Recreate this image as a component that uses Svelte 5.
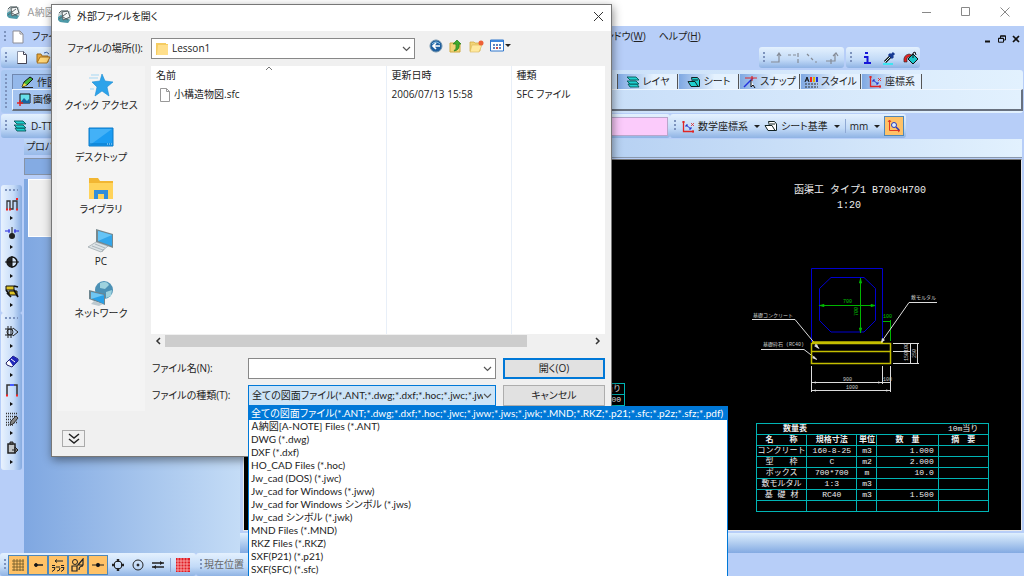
<script lang="ts">
    const places = ['クイック アクセス', 'デスクトップ', 'ライブラリ', 'PC', 'ネットワーク'];

    const fileTypes = [
        '全ての図面ファイル(*.ANT;*.dwg;*.dxf;*.hoc;*.jwc;*.jww;*.jws;*.jwk;*.MND;*.RKZ;*.p21;*.sfc;*.p2z;*.sfz;*.pdf)',
        'Ａ納図[A-NOTE] Files (*.ANT)',
        'DWG (*.dwg)',
        'DXF (*.dxf)',
        'HO_CAD Files (*.hoc)',
        'Jw_cad (DOS) (*.jwc)',
        'Jw_cad for Windows (*.jww)',
        'Jw_cad for Windows シンボル (*.jws)',
        'Jw_cad シンボル (*.jwk)',
        'MND Files (*.MND)',
        'RKZ Files (*.RKZ)',
        'SXF(P21) (*.p21)',
        'SXF(SFC) (*.sfc)'
    ];

    const tabs = ['レイヤ', 'シート', 'スナップ', 'スタイル', '座標系'];

    const quantities = [
        ['コンクリート', '160-8-25', 'm3', '1.000'],
        ['型　　枠', 'C', 'm2', '2.000'],
        ['ボックス', '700*700', 'm', '10.0'],
        ['敷モルタル', '1:3', 'm3', ''],
        ['基 礎 材', 'RC40', 'm3', '1.500'],
        ['', '', '', '']
    ];

    const snapModes = ['grid', 'end', 'line', 'shape', 'mid', 'circle', 'center', 'parallel'];

    let selectedType = $state(0);
    let fileName = $state('');
</script>

{#snippet appIcon()}
    <svg class="icon" width="15" height="15" viewBox="0 0 15 15">
        <path d="M1 5 5 1l8 1 1 8-3 4-8-1-2-3z" fill="#c9d3d5" />
        <path d="M1 8l3-2 9 5-2 3-8-1-2-2z" fill="#4c9aa8" />
        <path d="M5 3l6-1 2 6-7 3z" fill="#f5f7f7" stroke="#566164" />
        <path d="M2 10l8-6M2 4l2-2h7M6 8l5 3" stroke="#5d6769" fill="none" />
    </svg>
{/snippet}

{#snippet layerIcon()}
    <svg class="icon" width="14" height="12" viewBox="0 0 14 12">
        <g fill="#1fd0d0" stroke="#075656" stroke-width=".9">
            <path d="M2 8h9l2 3H4z" /><path d="M1 5h9l3 3H4z" /><path d="M1 1h9l3 3H4z" />
        </g>
    </svg>
{/snippet}

{#snippet sheetIcon(fill: string)}
    <svg class="icon" width="14" height="12" viewBox="0 0 14 12">
        <g {fill} stroke="#122" stroke-width="1">
            <path d="M4.500 1.500h6l2 2.500v6.500h-6z" /><path d="M1 5.500h7l3 5H4z" /><path d="M6 4h5" fill="none" />
        </g>
    </svg>
{/snippet}

{#snippet axisIcon()}
    <svg class="icon" width="14" height="13" viewBox="0 0 14 13">
        <path d="M2.500 1v10.500H13" stroke="#e02525" stroke-width="1.300" fill="none" />
        <path d="M1 2h3M12 10v3" stroke="#e02525" />
        <path d="M5 5l5 4M5 7V5h2M10 7v2H8" stroke="#2233cc" fill="none" />
        <path d="M10 3l3 3M13 3l-3 3" stroke="#e02525" stroke-width=".8" />
    </svg>
{/snippet}

{#snippet chevron()}
    <svg class="chevron" width="9" height="6" viewBox="0 0 9 6">
        <path d="M1 1l3.500 3.500L8 1" stroke="#555" stroke-width="1.200" fill="none" />
    </svg>
{/snippet}

<div class="app">
    <header class="titlebar">
        {@render appIcon()}
        <span class="app-name">Ａ納図</span>
        <div class="window-buttons">
            <button aria-label="最小化"><svg width="10" height="10"><path d="M0 5.500h9" stroke="#888" /></svg></button>
            <button aria-label="最大化"><svg width="10" height="10"><path d="M.5.5h8v8h-8z" stroke="#888" fill="none" /></svg></button>
            <button aria-label="閉じる"><svg width="10" height="10"><path d="M.5.5l9 9M9.500.5l-9 9" stroke="#888" /></svg></button>
        </div>
    </header>

    <nav class="menubar">
        <div class="left">
            <span class="grip"></span>
            <svg class="icon" width="12" height="14" viewBox="0 0 12 14"><path d="M1 1h7l3 3v9H1z" fill="#fff" stroke="#8d8d95" /><path d="M8 1v3h3" fill="none" stroke="#8d8d95" /></svg>
            <button class="menu">ファイル</button>
        </div>
        <div class="right">
            <button class="menu">ウィンドウ(<u>W</u>)</button>
            <button class="menu">ヘルプ(<u>H</u>)</button>
            <div class="mdi-buttons">
                <button aria-label="図面を最小化"><svg width="8" height="8"><path d="M1 6.500h5" stroke="#111" stroke-width="2" /></svg></button>
                <button aria-label="図面を元に戻す"><svg width="8" height="8"><path d="M2.500 3V.8h5V5H6M.5 3.200h5v4h-5zM.5 3.500h5M2.500 1.200h5" stroke="#111" fill="none" /></svg></button>
                <button aria-label="図面を閉じる"><svg width="8" height="8"><path d="M1 1l6 6M7 1L1 7" stroke="#111" stroke-width="1.700" /></svg></button>
            </div>
        </div>
    </nav>

    <div class="toolrow">
        <div class="bar wide">
            <span class="grip"></span>
            <button class="tool" aria-label="新規"><svg width="12" height="13" viewBox="0 0 12 13"><path d="M1.500.5h6l3 3v9h-9z" fill="#fff" stroke="#8a93a8" /><path d="M7.500.5v3h3M10.500 4v8.500h-9" fill="none" stroke="#445" /></svg></button>
            <button class="tool" aria-label="開く"><svg width="15" height="13" viewBox="0 0 15 13"><path d="M1 11V3h4l1 2h6v6z" fill="#e8a83c" stroke="#9c6b1b" /><path d="M1 12l3-6h10l-3 6z" fill="#ffd778" stroke="#a87320" /><path d="M8 2q3-2 5 1" stroke="#37609f" fill="none" /></svg></button>
        </div>
        <div class="bar line-tools">
            <span class="grip"></span>
            <svg width="74" height="16" viewBox="0 0 74 16">
                <g stroke="#858b96" stroke-width="1.200" fill="none">
                    <path d="M2 12h8V4M8 6l2-3 2 3M19 5h3m2 0h3M29 3v4M29 9v4M38 4l2 2m2 2 2 2M46 12h2M57 11h9V4M64 6l3-3 2 3M62 9v5" />
                </g>
            </svg>
        </div>
        <div class="bar">
            <span class="grip"></span>
            <button class="tool info" aria-label="情報"><svg width="12" height="14" viewBox="0 0 12 14"><path d="M4 2h3M3 6h3.500v5M3 12h7" stroke="#1515d8" stroke-width="2" fill="none" /></svg></button>
            <button class="tool" aria-label="スポイト"><svg width="14" height="14" viewBox="0 0 14 14"><path d="M1 13h10" stroke="#3fe5f2" stroke-width="2" /><path d="M3 11L9 5" stroke="#111" stroke-width="3" /><path d="M3 11l5-5" stroke="#c4f6fa" /><path d="M7 3l4 4M10 4l2-2" stroke="#173a92" stroke-width="3" /></svg></button>
            <button class="tool" aria-label="塗りつぶし"><svg width="16" height="14" viewBox="0 0 16 14"><path d="M1 11q-1-7 5-8l3 1-5 3v4z" fill="#e02323" stroke="#222" stroke-width=".6" /><path d="M5 8l5-5 5 5-5 5z" fill="#1bc6ca" stroke="#111" /><path d="M10 7V2l2-1 1 3" stroke="#111" fill="none" /></svg></button>
        </div>
    </div>

    <div class="tab-area">
        <span class="grip tall"></span>
        <div class="tab-panel">
            <div class="tab-row">
                <button class="tab draw">
                    <svg class="icon" width="13" height="12" viewBox="0 0 13 12"><path d="M1 11l2-5 6-5 3 2-6 6z" fill="#42b53b" stroke="#111" /><path d="M1 11l2-4 3 2z" fill="#f4da42" /><path d="M1 11.500h11" stroke="#222" /></svg>
                    作図
                </button>
                <div class="tabs">
                    {#each tabs as name, i}
                        <button class="tab">
                            {#if i === 0}
                                {@render layerIcon()}
                            {:else if i === 1}
                                {@render sheetIcon('#1fd0d0')}
                            {:else if i === 2}
                                <svg class="icon" width="14" height="12" viewBox="0 0 14 12"><path d="M1 11l9-9" stroke="#2433dd" stroke-width="1.500" /><path d="M2 2h12M9 0v5" stroke="#dd2a2a" stroke-width="1.200" /><path d="M8 4v7l2-2 2 3" fill="#fff" stroke="#111" /></svg>
                            {:else if i === 3}
                                <svg class="icon" width="14" height="12" viewBox="0 0 14 12"><path d="M1 6l2-5 2 5M2 4h2" stroke="#111" fill="none" /><path d="M7 1v5" stroke="#e22" stroke-width="2" /><path d="M10 1v5" stroke="#dcb900" stroke-width="2" /><path d="M13 1v5" stroke="#23c" stroke-width="2" /><path d="M1 8h13M1 11h13" stroke="#333" stroke-dasharray="2 1" /></svg>
                            {:else}
                                {@render axisIcon()}
                            {/if}
                            {name}
                        </button>
                    {/each}
                </div>
            </div>
            <div class="tab-content">
                <svg class="icon" width="14" height="13" viewBox="0 0 14 13"><path d="M3 1h10v9H3z" fill="#67dfe9" stroke="#111" /><path d="M3 10l4-5 3 3 2-2 1 4z" fill="#1765a2" /><path d="M3 7v6M0 10h6" stroke="#df2424" stroke-width="1.500" /></svg>
                画像
            </div>
        </div>
    </div>

    <div class="toolrow layer-row">
        <div class="bar layer-bar">
            <span class="grip"></span>
            {@render layerIcon()}
            <span>D-TTL</span>
            <input class="layer-color" aria-label="レイヤ色" />
        </div>
        <div class="bar coord-bar">
            <span class="grip"></span>
            {@render axisIcon()}
            <button class="drop">数学座標系<i></i></button>
            {@render sheetIcon('#fff')}
            <button class="drop">シート基準<i></i></button>
            <span class="separator"></span>
            <button class="drop unit">mm<i></i></button>
            <button class="toggle on" aria-label="図面の拡大"><svg width="14" height="14" viewBox="0 0 14 14"><path d="M2.500 1v10.500H13M1 3l1.500-2L4 3M11 10l2 1.500L11 13" stroke="#e33b22" fill="none" /><circle cx="7" cy="6" r="2.500" fill="#d9ecff" stroke="#2a38bb" /><path d="M9 8l3 3" stroke="#2a38bb" stroke-width="1.500" /></svg></button>
        </div>
    </div>

    <main class="workspace">
        <aside class="tool-strip">
            <div class="strip">
                <span class="grip-h"></span>
                <button aria-label="連続線"><svg viewBox="0 0 14 14"><path d="M2 12V4h3v8h3V4h4v8M8 4v8" stroke="#333" fill="none" stroke-width="1.300" /><path d="M1 12.500h2M4 12.500h2M11 12.500h2M12 1v2" stroke="#e22" stroke-width="2" /></svg></button>
                <button aria-label="寸法"><svg viewBox="0 0 14 14"><path d="M0 5h5M9 5h5M4 3v4M10 3v4" stroke="#2525df" /><path d="M7 1v8" stroke="#222" /><circle cx="7" cy="10" r="3" fill="#222" /></svg></button>
                <button aria-label="記号"><svg viewBox="0 0 14 14"><circle cx="7" cy="7" r="5" fill="#d8e8fa" stroke="#111" stroke-width="1.500" /><path d="M7 2a5 5 0 0 0 0 10z" fill="#222" /><path d="M0 7h14M7 1v12" stroke="#111" /></svg></button>
                <button aria-label="部品"><svg viewBox="0 0 14 14"><path d="M1 2h8v4H1zM4 7h8v4H4z" fill="#ddc326" stroke="#111" /><path d="M1 6l3 4M9 2l4 1M9 6l4 7M2 9l4 4" stroke="#111" stroke-width="1.700" /></svg></button>
            </div>
            <div class="strip">
                <span class="grip-h"></span>
                <button aria-label="トリム"><svg viewBox="0 0 14 14"><path d="M0 4h8M0 10h8M3 1v12M6 1v12M8 3l5 4-5 4" stroke="#222" fill="none" /><circle cx="5" cy="7" r="3" fill="none" stroke="#222" /></svg></button>
                <button aria-label="削除"><svg viewBox="0 0 14 14"><path d="M1 9l7-7 5 3v2l-6 6-5-2z" fill="#fff" stroke="#222266" /><path d="M4 6l4-4 5 3v2l-5 5z" fill="#2027b9" /><path d="M6 5l4 3" stroke="#fff" /></svg></button>
                <button aria-label="移動"><svg viewBox="0 0 14 14"><path d="M2 12V2h10v10" stroke="#333" stroke-width="1.500" fill="none" /><path d="M5 2h4" stroke="#4459ff" stroke-width="2" /><path d="M1 12.500h2M11 12.500h2" stroke="#f22" stroke-width="2" /></svg></button>
                <button aria-label="ハッチ"><svg viewBox="0 0 14 14"><path d="M1 1.500h12M1 4.500h12M1 7.500h12M1 10.500h12M1 13h8" stroke="#333" stroke-width="1.500" stroke-dasharray="1 1" /><path d="M6 9l5-5 2 2-5 6-3 1z" fill="#888" stroke="#333" /></svg></button>
                <button aria-label="貼り付け"><svg viewBox="0 0 14 14"><path d="M3 3h7v9H3z" fill="#c1c5c8" stroke="#222" stroke-width="1.500" /><path d="M5 1h3v2H5zM7 9h4M10 6l3 3-3 3z" fill="#777" stroke="#222" /></svg></button>
            </div>
        </aside>

        <section class="properties">
            <h2>プロパティ</h2>
            <div class="property-name"></div>
            <div class="property-body"><div class="property-list"></div></div>
        </section>

        <section class="document">
            <div class="document-head"></div>
            <div class="canvas">
                <svg class="drawing" width="776" height="368" viewBox="244 160 776 368">
                    <g class="note-title">
                        <text x="794" y="193">函渠工 タイプ1 B700×H700</text>
                        <text x="837" y="208">1:20</text>
                    </g>
                    <g fill="none" stroke="#0000d0">
                        <path d="M811.500 342V268.500h71V342" />
                        <path d="M831 277.500h33l11.500 11v32l-11.500 11.500h-33l-11.500-11.500v-32z" />
                    </g>
                    <g stroke="#00b400" fill="#00c400">
                        <path d="M819 305.500h56M860.500 278v55M883 321.500h8M890.500 320v21" />
                        <path d="M820 305.500l4-1v2zM875 305.500l-4-1v2zM860.500 279l-1 4h2zM860.500 332l-1-4h2z" />
                    </g>
                    <g stroke="#ddd" fill="none">
                        <path d="M752 319.500h43l24 29M761 349.500h43l13 10M937 302.500h-28l-28 40" />
                        <path d="M893 343.500h26M893 351.500h18M893 363.500h26M910.500 343v21M917.500 343v21" />
                        <path d="M811.500 366v26M882.500 366v18M890.500 366v26M812 382.500h79M812 390.500h79" />
                    </g>
                    <path d="M811.500 343.500h79v20h-79zM811 351.500h80M812 342h71" stroke="#c4be00" stroke-width="1.500" fill="none" />
                    <g fill="#ddd">
                        <path d="M819 349l-5-3 3-2zM817 360l-5-2 2-2zM881 343l1-5 3 2zM812 382.500l4-1v2zM882 382.500l-4-1v2zM812 390.500l4-1v2zM890 390.500l-4-1v2z" />
                    </g>
                    <g class="label">
                        <text x="753" y="317">基礎コンクリート</text>
                        <text x="763" y="346">基礎砕石 (RC40)</text>
                        <text x="911" y="299">敷モルタル</text>
                        <text x="843" y="381">900</text>
                        <text x="883" y="381">100</text>
                        <text x="846" y="389">1000</text>
                        <text transform="rotate(-90 908 361)" x="908" y="361">150100</text>
                        <text transform="rotate(-90 916 358)" x="916" y="358">250</text>
                    </g>
                    <g class="label green">
                        <text x="843" y="303">700</text>
                        <text x="883" y="318">100</text>
                        <text transform="rotate(-90 858 316)" x="858" y="316">700</text>
                    </g>
                </svg>

                <table class="quantity partial">
                    <tbody>
                        <tr><td>10m当り</td></tr>
                        <tr><td>1.000</td></tr>
                    </tbody>
                </table>

                <table class="quantity main-table">
                    <colgroup><col class="w50" /><col class="w50" /><col class="w20" /><col class="w60" /><col class="w50" /></colgroup>
                    <tbody>
                        <tr class="caption"><th colspan="2">数量表</th><td></td><td></td><td>10m当り</td></tr>
                        <tr><th>名　　称</th><th>規格寸法</th><th>単位</th><th>数　量</th><th>摘　要</th></tr>
                        {#each quantities as [name, size, unit, amount]}
                            <tr><td>{name}</td><td>{size}</td><td>{unit}</td><td class="amount">{amount}</td><td></td></tr>
                        {/each}
                    </tbody>
                </table>
            </div>
            <div class="document-foot"></div>
        </section>
    </main>

    <footer class="statusbar">
        <div class="bar">
            <span class="grip"></span>
            {#each snapModes as mode, i}
                <button class="toggle" class:on={i < 5} aria-label={mode}>
                    <svg width="14" height="14" viewBox="0 0 14 14" fill="none" stroke="#222">
                        {#if mode === 'grid'}
                            <path d="M1 3h12M1 6h12M1 9h12M1 12h12M3 1v12M6 1v12M9 1v12M12 1v12" stroke="#6a5526" stroke-width=".8" />
                        {:else if mode === 'end'}
                            <path d="M4 7h8" stroke-width="1.500" /><circle cx="5" cy="7" r="1.500" fill="#111" />
                        {:else if mode === 'line'}
                            <path d="M4 3h8M6 1.500L4 3l2 1.500M1 7.500h3M1 9.500h3q0 3-3 4M6 8v2M8 8v2M9 10q0 3-3 3M10 7.500h3M10 9.500h3q0 3-3 4" />
                        {:else if mode === 'shape'}
                            <circle cx="4" cy="4" r="2.500" /><path d="M1 8h5v5H1zM7 7l5-6v6zM8 12q0-4 4-4" stroke-width="1.200" />
                        {:else if mode === 'mid'}
                            <path d="M1 7h12" /><circle cx="7" cy="7" r="1.700" fill="#111" />
                        {:else if mode === 'circle'}
                            <circle cx="7" cy="7" r="4" /><path d="M7 1v3M7 10v3M1 7h3M10 7h3" stroke-width="2.500" />
                        {:else if mode === 'center'}
                            <circle cx="7" cy="7" r="5" /><circle cx="7" cy="7" r="1" fill="#111" />
                        {:else}
                            <path d="M1 5h12M1 9h12" stroke-width="1.300" /><path d="M9 3l3 2-3 2M5 7L2 9l3 2" fill="#222" stroke="none" />
                        {/if}
                    </svg>
                </button>
            {/each}
            <span class="separator"></span>
            <button class="toggle" aria-label="グリッド"><svg width="14" height="14" viewBox="0 0 14 14"><path d="M0 0h14v14H0z" fill="#e01c24" /><path d="M0 3h14M0 6h14M0 9h14M0 12h14M2 0v14M5 0v14M8 0v14M11 0v14" stroke="#ffc9c9" stroke-width=".7" /></svg></button>
        </div>
        <div class="bar position"><span class="grip"></span>現在位置</div>
    </footer>

    <div class="dialog" role="dialog" aria-label="外部ファイルを開く">
        <div class="dialog-title">
            {@render appIcon()}
            <span>外部ファイルを開く</span>
            <button aria-label="閉じる"><svg width="11" height="11"><path d="M1 1l9 9M10 1l-9 9" stroke="#333" /></svg></button>
        </div>

        <div class="look-in">
            <label for="folder">ファイルの場所(I):</label>
            <div class="combo">
                <svg class="icon" width="12" height="14" viewBox="0 0 12 14"><path d="M0 1h10v1h2v11H0z" fill="#f5cc62" /><path d="M2 3h10v10H1z" fill="#ffdf8b" /></svg>
                <select id="folder"><option>Lesson1</option></select>
                {@render chevron()}
            </div>
            <div class="folder-tools">
                <button aria-label="戻る"><svg width="14" height="14" viewBox="0 0 14 14"><circle cx="7" cy="7" r="6" fill="#1f5f9f" stroke="#6e91ab" /><path d="M3 5q4-4 8 0" stroke="#8bc3e5" fill="none" /><path d="M11 7H4M7 4L4 7l3 3" stroke="#fff" stroke-width="1.700" fill="none" /></svg></button>
                <button aria-label="上へ"><svg width="14" height="14" viewBox="0 0 14 14"><path d="M1 4h4l1 1h5v8H1z" fill="#f2d477" stroke="#cfa83e" /><path d="M5 12q3-2 2-7H4l4-4 4 4h-2q1 6-5 7z" fill="#3faa2c" stroke="#227d18" stroke-width=".7" /></svg></button>
                <button aria-label="新しいフォルダー"><svg width="15" height="14" viewBox="0 0 15 14"><path d="M1 3h4l1 1h5v8H1z" fill="#f2d477" stroke="#cfa83e" stroke-width=".7" /><path d="M3 6h10l-3 7H1z" fill="#ffe99e" stroke="#d9b75a" stroke-width=".6" /><circle cx="12" cy="4" r="2.500" fill="#ed6038" /></svg></button>
                <button class="view" aria-label="表示">
                    <svg width="21" height="14" viewBox="0 0 21 14"><path d="M.5 1h13v11H.5z" fill="#fff" stroke="#2f76cc" /><path d="M1 2h12" stroke="#3f87dd" stroke-width="2" /><path d="M3 6h2M6 6h2M9 6h2M3 9h2M9 9h2" stroke="#5d83c0" stroke-width="2" /><path d="M6 9h2" stroke="#c44e4e" stroke-width="2" /><path d="M15 5h6l-3 3z" fill="#222" /></svg>
                </button>
            </div>
        </div>

        <div class="dialog-body">
            <div class="side">
                <nav class="places">
                    {#each places as place, i}
                        <button class="place">
                            <svg width="28" height="28" viewBox="0 0 28 28">
                                {#if i === 0}
                                    <path d="M15 3l3 7 8 1-6 5 2 9-7-5-7 5 2-9-5-5 8-1z" fill="#2da3ea" stroke="#188bd4" stroke-width=".6" />
                                    <path d="M4 4h8M2 7h9M3 18h4" stroke="#a5d7f4" />
                                {:else if i === 1}
                                    <path d="M2 5h24v18H2z" fill="#1b9cf2" stroke="#0d7ac8" /><path d="M3 6h22L3 22z" fill="#43b1f7" /><path d="M3 21h22" stroke="#0876c3" /><path d="M20 21h5" stroke="#b9e4ff" stroke-dasharray="1 1" />
                                {:else if i === 2}
                                    <path d="M2 3h9l2 3h13v18H2z" fill="#f2b632" /><path d="M2 8h24v16H2z" fill="#ffd35a" /><path d="M7 24v-9h14v9h-4v-5h-6v5z" fill="#328ed9" />
                                {:else if i === 3}
                                    <path d="M9 2l17 5v14L9 15z" fill="#77898f" /><path d="M11 4l14 4v11l-14-5z" fill="#33a6ea" /><path d="M11 4l14 4-14 6z" fill="#65c4f6" /><path d="M1 20l8-5 12 4-7 6z" fill="#dce3e6" stroke="#8b979c" stroke-width=".6" /><path d="M5 19l11 4M8 17l10 4M17 22l-2 3" stroke="#98a4aa" stroke-width=".7" />
                                {:else}
                                    <circle cx="17" cy="11" r="9" fill="#4c91b5" /><path d="M13 4q7-3 9 2l-4 4-5-1zM19 13l6-2-1 6-5 2z" fill="#9ed2de" /><path d="M2 11l16 4v11L2 20z" fill="#6d858f" /><path d="M4 13l13 3v9L4 19z" fill="#28a0e8" /><path d="M4 13l13 3-13 4z" fill="#70c6f3" /><path d="M7 22l-3 3 8 2 4-2" fill="#bdc9cf" />
                                {/if}
                            </svg>
                            <span>{place}</span>
                        </button>
                    {/each}
                </nav>
                <button class="expand" aria-label="詳細"><svg width="14" height="12" viewBox="0 0 14 12"><path d="M2 1l5 4 5-4M2 6l5 4 5-4" stroke="#222" stroke-width="1.500" fill="none" /></svg></button>
            </div>

            <div class="content">
                <div class="file-list">
                    <svg class="sort" width="8" height="5" viewBox="0 0 8 5"><path d="M1 4l3-3 3 3" stroke="#777" fill="none" /></svg>
                    <table>
                        <colgroup><col class="name-col" /><col class="date-col" /><col /></colgroup>
                        <thead><tr><th>名前</th><th>更新日時</th><th>種類</th></tr></thead>
                        <tbody>
                            <tr>
                                <td class="file"><svg class="icon" width="12" height="14" viewBox="0 0 12 14"><path d="M1.500.5h6l3 3v10h-9z" fill="#fff" stroke="#999" /><path d="M7.500.5v3h3" stroke="#999" fill="none" /></svg>小構造物図.sfc</td>
                                <td>2006/07/13 15:58</td>
                                <td>SFC ファイル</td>
                            </tr>
                            <tr class="filler"><td></td><td></td><td></td></tr>
                        </tbody>
                    </table>
                </div>
                <div class="scrollbar">
                    <button aria-label="左へ"><svg width="6" height="8"><path d="M5 1L2 4l3 3" stroke="#333" stroke-width="1.500" fill="none" /></svg></button>
                    <div class="track"><div class="thumb"></div></div>
                    <button aria-label="右へ"><svg width="6" height="8"><path d="M1 1l3 3-3 3" stroke="#333" stroke-width="1.500" fill="none" /></svg></button>
                </div>

                <div class="fields">
                    <label for="filename">ファイル名(N):</label>
                    <div class="combo"><input id="filename" bind:value={fileName} />{@render chevron()}</div>
                    <button class="push primary">開く(O)</button>

                    <label for="filetype">ファイルの種類(T):</label>
                    <div class="combo type">
                        <select id="filetype" bind:value={selectedType}>
                            {#each fileTypes as type, i}
                                <option value={i}>{type}</option>
                            {/each}
                        </select>
                        {@render chevron()}
                        <ul class="type-list" role="listbox" aria-label="ファイルの種類">
                            {#each fileTypes as type, i}
                                <li role="option" aria-selected={i === selectedType} class:selected={i === selectedType}>{type}</li>
                            {/each}
                        </ul>
                    </div>
                    <button class="push">キャンセル</button>
                </div>
            </div>
        </div>
    </div>
</div>

<style>
    :global(body) {
        margin: 0;
        overflow: hidden;
    }

    .app {
        position: relative;
        display: flex;
        flex-direction: column;
        height: 100vh;
        overflow: hidden;
        background: #b7cef8;
        color: #222;
        font-family: "Open Sans", "Noto Sans CJK JP", sans-serif;
        font-size: 10px;
        line-height: 13px;
        font-feature-settings: "palt";
        white-space: nowrap;
    }

    .app *,
    .app *::before {
        box-sizing: border-box;
    }

    button,
    input,
    select {
        margin: 0;
        padding: 0;
        border: 0;
        background: none;
        color: inherit;
        font: inherit;
        font-feature-settings: inherit;
    }

    button {
        display: flex;
        align-items: center;
        justify-content: center;
        flex: none;
    }

    .icon,
    button svg {
        display: block;
        flex: none;
    }

    .titlebar {
        display: flex;
        align-items: center;
        gap: 6px;
        flex: none;
        height: 26px;
        padding: 0 14px 2px 6px;
        background: #fff;
    }

    .app-name {
        color: #999;
    }

    .window-buttons {
        display: flex;
        gap: 29px;
        margin-left: auto;
    }

    .menubar {
        display: grid;
        grid-template-columns: 588px 1fr;
        flex: none;
        height: 21px;
    }

    .menubar .left,
    .menubar .right {
        display: flex;
        align-items: center;
    }

    .menubar .left {
        gap: 4px;
    }

    .menubar .left .menu {
        margin-left: 4px;
    }

    .menubar .right {
        gap: 13px;
    }

    .mdi-buttons {
        display: flex;
        gap: 6px;
        margin: 4px 4px 0 auto;
    }

    .grip {
        flex: none;
        width: 2px;
        height: 12px;
        margin: 0 2px 0 4px;
        background: repeating-linear-gradient(#7d93bd 0 2px, transparent 2px 4px);
    }

    .grip.tall {
        height: 34px;
        margin: 4px 5px 0 4px;
    }

    .toolrow {
        display: flex;
        gap: 2px;
        flex: none;
        height: 21px;
        padding-left: 1px;
    }

    .bar {
        display: flex;
        align-items: center;
        gap: 4px;
        border-radius: 3px;
        background: linear-gradient(#e4f1fe, #c2daf7 60%, #8fb3e4);
    }

    .bar.wide {
        width: 300px;
        margin-right: 456px;
    }

    .bar.line-tools {
        width: 85px;
        gap: 2px;
    }

    .bar .tool {
        width: 17px;
        margin-right: 1px;
    }

    .tab-area {
        display: flex;
        flex: none;
        height: 43px;
        margin: 2px 1px 0;
        border-radius: 3px;
        background: linear-gradient(90deg, #a9c8f2, #e2f1fe);
    }

    .tab-panel {
        flex: 1;
        display: flex;
        flex-direction: column;
        padding-top: 4px;
    }

    .tab-row {
        display: grid;
        grid-template-columns: 605px 1fr;
        flex: none;
        height: 15px;
    }

    .tabs {
        display: flex;
        border-left: 1px solid #555;
    }

    .tab {
        gap: 3px;
        width: 60px;
        margin-right: 1px;
        border-right: 1px solid #555;
        background: linear-gradient(90deg, #7fa8e2, #e4f1fe 60%);
    }

    .tab.draw {
        justify-content: flex-start;
        width: 70px;
        padding-left: 8px;
        border: 1px solid #7088b0;
        border-bottom: 0;
        background: #94b8ea;
    }

    .tab-content {
        display: flex;
        align-items: center;
        gap: 2px;
        height: 22px;
        padding-left: 4px;
        border: 1px solid #eef6ff;
        border-right: 2px solid #68717f;
        border-bottom: 2px solid #68717f;
        background: linear-gradient(90deg, #a3c3f0, #e2f1fe);
    }

    .layer-row {
        gap: 0;
        height: 24px;
        margin-top: 1px;
    }

    .layer-bar {
        width: 669px;
    }

    .layer-color {
        width: 80px;
        height: 19px;
        margin-left: auto;
        margin-right: 2px;
        border: 1px solid #b9a6cc;
        background: #fbcbfb;
    }

    .coord-bar {
        gap: 3px;
        padding-right: 2px;
    }

    .drop {
        gap: 6px;
        margin-right: 1px;
    }

    .drop i {
        border: 3px solid transparent;
        border-top: 3px solid #222;
        border-bottom: 0;
    }

    .separator {
        flex: none;
        width: 1px;
        height: 14px;
        margin: 0 1px;
        background: #8fa9d4;
    }

    .toggle {
        width: 20px;
        height: 20px;
    }

    .toggle.on {
        border: 1px solid #4f87b8;
        background: #ffc267;
    }

    .workspace {
        display: flex;
        flex: 1;
        min-height: 0;
    }

    .tool-strip {
        flex: none;
        width: 24px;
        padding: 47px 2px 0 1px;
    }

    .strip {
        display: flex;
        flex-direction: column;
        align-items: center;
        border-radius: 3px;
        background: linear-gradient(90deg, #e8f2fe, #c5dbf8 60%, #86abe0);
    }

    .strip button {
        flex-direction: column;
        justify-content: flex-start;
        width: 20px;
        height: 29px;
    }

    .strip button::after {
        content: '';
        margin-top: 5px;
        border: 2px solid transparent;
        border-left: 3px solid #111;
        border-right: 0;
    }

    .strip svg {
        width: 14px;
        height: 14px;
    }

    .grip-h {
        width: 13px;
        height: 2px;
        margin: 4px 0 6px;
        background: repeating-linear-gradient(90deg, #7d93bd 0 2px, transparent 2px 4px);
    }

    .properties {
        display: flex;
        flex-direction: column;
        flex: none;
        width: 216px;
    }

    .properties h2 {
        height: 16px;
        margin: 1px 0 3px;
        padding: 1px 2px;
        background: linear-gradient(#c4daf8, #98bae9);
        font-size: 10px;
        font-weight: normal;
    }

    .property-name {
        height: 17px;
        margin-bottom: 4px;
        border: 1px solid #8793a6;
        background: #84abe3;
    }

    .property-body {
        flex: 1;
        padding: 0 4px;
        background: linear-gradient(90deg, #7fa7e1, #c4dcf6);
    }

    .property-list {
        height: 58px;
        border: 1px solid #fff;
        background: #f0f0f0;
    }

    .document {
        display: flex;
        flex-direction: column;
        flex: 1;
        min-width: 0;
    }

    .document-head {
        height: 19px;
        margin: 1px 2px 0 0;
        border-bottom: 1px solid #8a98ad;
        background: linear-gradient(90deg, #8fb4e8, #e2f1fe);
    }

    .canvas {
        position: relative;
        flex: 1;
        overflow: hidden;
        margin: 1px 2px 2px 3px;
        border: 1px solid #e8e8e8;
        border-top: 1px solid #777;
        background: #000;
    }

    .document-foot {
        flex: none;
        height: 20px;
        background: linear-gradient(#dff0fe, #83aae2);
    }

    .drawing {
        display: block;
    }

    .note-title {
        fill: #eee;
        font-family: "Liberation Mono", "Noto Sans CJK JP", monospace;
        font-size: 10px;
        font-feature-settings: normal;
    }

    .label {
        fill: #ccc;
        font-family: "Liberation Mono", "Noto Sans CJK JP", monospace;
        font-size: 5px;
        font-feature-settings: normal;
    }

    .label.green {
        fill: #00c400;
    }

    .quantity {
        position: absolute;
        border-collapse: collapse;
        table-layout: fixed;
        color: #eee;
        font-family: "Liberation Mono", "Noto Sans CJK JP", monospace;
        font-size: 8px;
        font-feature-settings: normal;
        line-height: 10px;
        text-align: center;
    }

    .main-table {
        top: 263px;
        left: 512px;
        width: 233px;
    }

    .partial {
        top: 223px;
        left: 330px;
        width: 51px;
    }

    .quantity th,
    .quantity td {
        height: 11px;
        padding: 0;
        border: 1px solid #00b4b4;
        overflow: hidden;
    }

    .quantity.partial td {
        padding-right: 3px;
        text-align: right;
    }

    .quantity .caption th,
    .quantity .caption td {
        border-left: 0;
        border-right: 0;
    }

    .quantity .caption th:first-child {
        padding-right: 24px;
        border-left: 1px solid #00b4b4;
    }

    .quantity .caption td:last-child {
        border-right: 1px solid #00b4b4;
    }

    .quantity .amount {
        padding-right: 4px;
        text-align: right;
    }

    .w50 {
        width: 50px;
    }

    .w20 {
        width: 20px;
    }

    .w60 {
        width: 61px;
    }

    .statusbar {
        display: flex;
        flex: none;
        height: 23px;
    }

    .statusbar .bar {
        gap: 0;
    }

    .statusbar .bar:first-child {
        width: 196px;
    }

    .statusbar .separator {
        margin: 0 2px;
    }

    .statusbar .position {
        flex: none;
        width: 130px;
        color: #666;
    }

    .dialog {
        position: absolute;
        top: 4px;
        left: 51px;
        width: 561px;
        height: 453px;
        display: flex;
        flex-direction: column;
        border: 1px solid #777;
        background: #f0f0f0;
        box-shadow: 1px 3px 9px rgba(0, 0, 0, 0.45);
    }

    .dialog-title {
        display: flex;
        align-items: center;
        gap: 5px;
        flex: none;
        height: 26px;
        padding: 0 7px 3px 5px;
        background: #fff;
    }

    .dialog-title button {
        margin-left: auto;
    }

    .look-in {
        display: flex;
        align-items: center;
        flex: none;
        height: 35px;
        padding-left: 5px;
    }

    .look-in label {
        width: 86px;
        text-align: right;
    }

    .combo {
        position: relative;
        display: flex;
        align-items: center;
        height: 21px;
        padding: 0 3px 0 4px;
        border: 1px solid #888;
        background: #fff;
    }

    .combo input,
    .combo select {
        flex: 1;
        min-width: 0;
        height: 19px;
        appearance: none;
        outline: 0;
    }

    .look-in .combo {
        width: 264px;
        margin-left: 8px;
        gap: 4px;
    }

    .folder-tools {
        display: flex;
        gap: 6px;
        margin: 0 0 6px 14px;
    }

    .dialog-body {
        display: flex;
        gap: 6px;
        flex: 1;
        padding: 0 6px 0 5px;
    }

    .side {
        display: flex;
        flex-direction: column;
        align-items: flex-start;
        flex: none;
        width: 88px;
    }

    .places {
        width: 100%;
        height: 345px;
        background: #f4f4f4;
    }

    .place {
        flex-direction: column;
        justify-content: flex-start;
        width: 100%;
        height: 52px;
        padding-top: 5px;
    }

    .expand {
        width: 23px;
        height: 17px;
        margin: 19px 0 0 5px;
        border: 1px solid #aaa;
        background: #f0f0f0;
    }

    .content {
        flex: 1;
        min-width: 0;
    }

    .file-list {
        position: relative;
        height: 268px;
        background: #fff;
    }

    .sort {
        position: absolute;
        top: 0;
        left: 114px;
    }

    .file-list table {
        width: 100%;
        height: 100%;
        border-collapse: collapse;
        table-layout: fixed;
    }

    .name-col {
        width: 235px;
    }

    .date-col {
        width: 125px;
    }

    .file-list th,
    .file-list td {
        height: 19px;
        padding: 0 5px;
        border-right: 1px solid #e8eff8;
        font-weight: normal;
        text-align: left;
    }

    .file-list th:last-child,
    .file-list td:last-child {
        border-right: 0;
    }

    .file-list .file svg {
        float: left;
        margin: 0 3px 0 3px;
    }

    .file-list .filler td {
        height: auto;
    }

    .scrollbar {
        display: flex;
        align-items: center;
        height: 14px;
    }

    .scrollbar button {
        width: 14px;
    }

    .track {
        flex: 1;
        height: 12px;
    }

    .thumb {
        width: 85%;
        height: 12px;
        background: #cdcdcd;
    }

    .fields {
        display: grid;
        grid-template-columns: 97px 248px 102px;
        grid-template-rows: 21px 21px;
        row-gap: 6px;
        align-items: center;
        margin-top: 10px;
    }

    .fields label {
        padding-left: 1px;
    }

    .combo.type {
        padding-left: 3px;
        border-color: #0078d7;
        background: #cce4f7;
        font-family: Lato, "Noto Sans CJK JP", sans-serif;
    }

    .push {
        justify-self: stretch;
        height: 21px;
        margin-left: 7px;
        margin-right: -7px;
        border: 1px solid #adadad;
        background: #e1e1e1;
    }

    .push.primary {
        border: 2px solid #0078d7;
    }

    .type-list {
        position: absolute;
        top: 20px;
        left: -1px;
        z-index: 1;
        width: max-content;
        min-width: 480px;
        margin: 0;
        padding: 0;
        border: 1px solid #0078d7;
        background: #fff;
        list-style: none;
    }

    .type-list li {
        height: 13px;
        padding: 0 2px;
    }

    .type-list .selected {
        background: #0078d7;
        color: #fff;
    }
</style>
